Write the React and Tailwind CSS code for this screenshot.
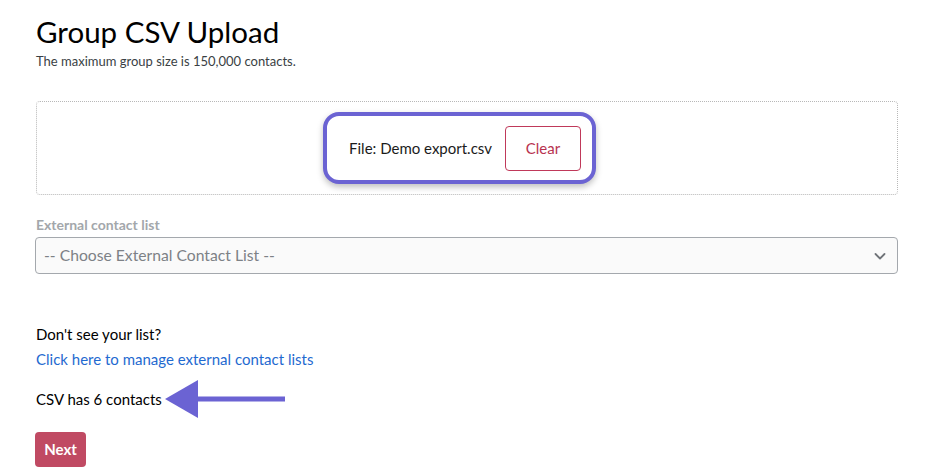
import React from "react";

export default function App() {
  return (
    <div className="w-[932px] h-[476px] bg-white overflow-hidden" style={{ fontFamily: "Lato, 'Liberation Sans', sans-serif" }}>
      <div className="pl-[36px] pr-[34px] pt-[14px]">
        <h1 className="text-[29.5px] leading-[36px] text-black font-normal">Group CSV Upload</h1>
        <p className="text-[13px] leading-[18px] text-[#3a3f44] mt-[2px]">The maximum group size is 150,000 contacts.</p>

        <div className="mt-[31px] h-[94px] border border-dotted border-[#b8b8b8] rounded-[4px] flex items-center justify-center">
          <div className="mr-[15px] flex items-center gap-[13px] border-[4px] border-[#6b63d3] rounded-[16px] pl-[22px] pr-[11px] h-[72px] shadow-[0_3px_6px_rgba(0,0,0,0.25)] bg-white">
            <span className="text-[15px] text-[#1b1b1b]">File: Demo export.csv</span>
            <button className="h-[45px] w-[76px] border border-[#c0395a] rounded-[4px] text-[15px] text-[#b8334f] bg-white">Clear</button>
          </div>
        </div>

        <div className="mt-[22px] text-[14px] font-bold text-[#a3a7ab] leading-[16px]">External contact list</div>
        <div className="mt-[4px] h-[37px] -ml-px border border-[#a4a8ad] rounded-[4px] bg-[#fafafa] flex items-center justify-between pl-[8px] pr-[10px]">
          <span className="text-[15.7px] text-[#7d8186]">-- Choose External Contact List --</span>
          <svg width="14" height="14" viewBox="0 0 14 14" fill="none">
            <path d="M2.5 5l4.5 4.5L11.5 5" stroke="#6f7378" strokeWidth="1.8" strokeLinecap="round" strokeLinejoin="round" />
          </svg>
        </div>

        <div className="mt-[50px] text-[15px] leading-[20px] text-black">Don't see your list?</div>
        <a className="block mt-[5px] text-[15px] leading-[20px] text-[#1f6ad0]">Click here to manage external contact lists</a>

        <div className="mt-[10px] flex items-center h-[40px]">
          <span className="text-[15px] leading-[20px] text-black">CSV has 6 contacts</span>
          <svg className="ml-[3px]" width="122" height="40" viewBox="0 0 122 40">
            <polygon points="0,20 33,1 33,39" fill="#6b63d3" />
            <rect x="32" y="17.5" width="88" height="5" fill="#6b63d3" />
          </svg>
        </div>

        <button className="mt-[13px] -ml-px h-[35px] w-[51px] rounded-[4px] bg-[#c04a63] text-white text-[15px] font-bold">Next</button>
      </div>
    </div>
  );
}
